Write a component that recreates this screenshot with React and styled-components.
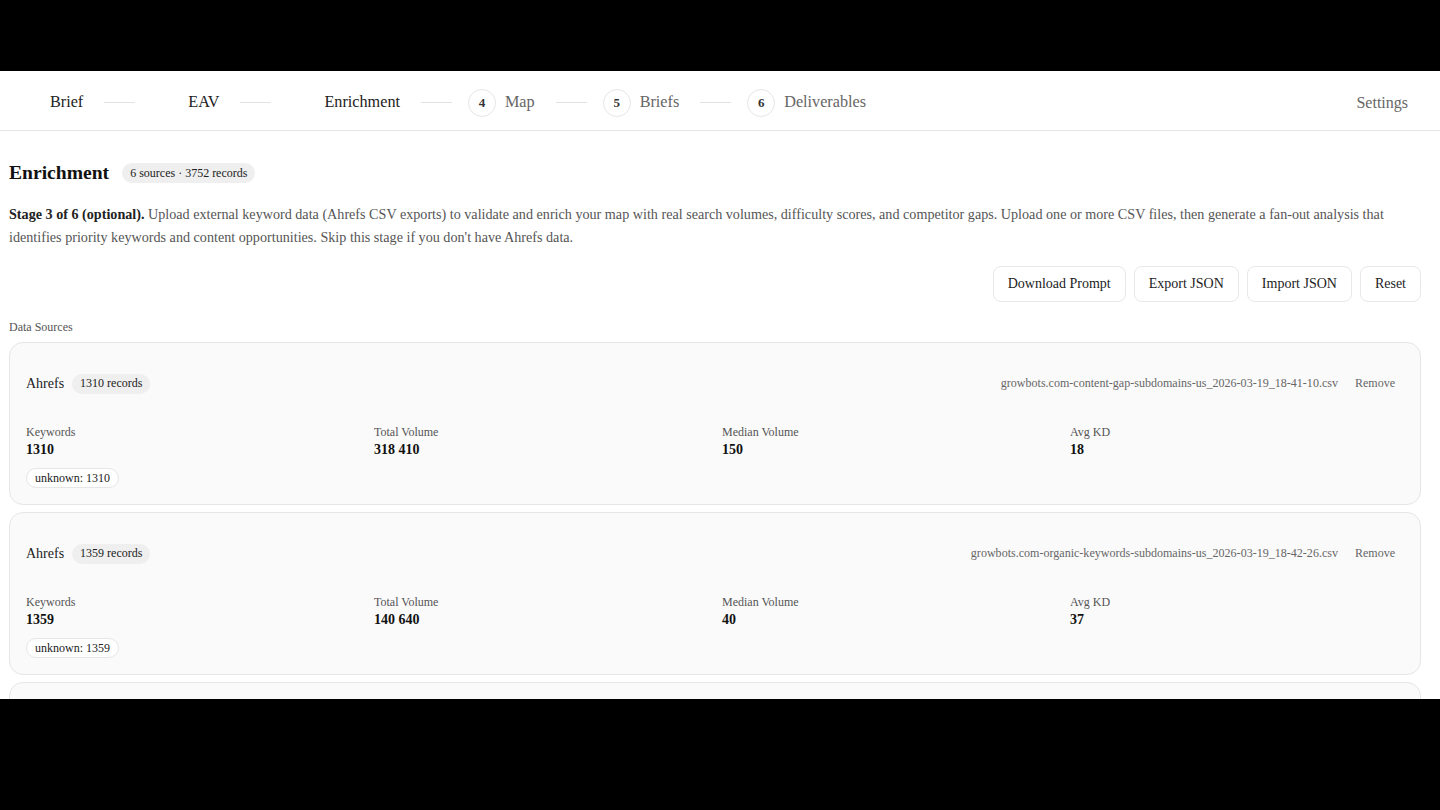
import React from 'react';
import styled, { createGlobalStyle } from 'styled-components';

const GlobalStyle = createGlobalStyle`
  html, body {
    margin: 0;
    padding: 0;
    background: #000;
  }
  body {
    font-family: "Liberation Serif", "Times New Roman", serif;
    color: #1a1a1a;
  }
  * { box-sizing: border-box; }
`;

const Screen = styled.div`
  height: 810px;
  padding-top: 71px;
  background: #000;
`;

const Frame = styled.div`
  height: 628px;
  overflow: hidden;
  background: #fff;
`;

const Nav = styled.header`
  height: 60px;
  border-bottom: 1px solid #e6e6e6;
  display: flex;
  align-items: center;
  justify-content: space-between;
  padding: 4px 32px 0 13px;
`;

const Steps = styled.div`
  display: flex;
  align-items: center;
`;

const Step = styled.div`
  display: flex;
  align-items: center;
  gap: 9px;
`;

const StepDot = styled.span`
  width: 28px;
  height: 28px;
  border-radius: 50%;
  border: 1px solid #e6e6e6;
  display: flex;
  align-items: center;
  justify-content: center;
  font-size: 13px;
  font-weight: 700;
  color: #333;
  visibility: ${(p) => (p.$done ? 'hidden' : 'visible')};
`;

const StepLabel = styled.span`
  font-size: 16.2px;
  color: ${(p) => (p.$done ? '#222' : '#666')};
`;

const Connector = styled.span`
  width: 31px;
  height: 1px;
  background: #e2e2e2;
  margin: 0 16px 0 21px;
`;

const SettingsLink = styled.a`
  font-size: 16px;
  color: #666;
  text-decoration: none;
  cursor: pointer;
`;

const Main = styled.main`
  padding: 25px 19px 0 9px;
`;

const TitleRow = styled.div`
  height: 34px;
  display: flex;
  align-items: center;
  gap: 13px;
`;

const Title = styled.h1`
  margin: 0;
  font-size: 19.6px;
  font-weight: 700;
  color: #111;
`;

const Pill = styled.span`
  display: inline-flex;
  align-items: center;
  height: 20px;
  padding: 0 8px;
  border-radius: 10px;
  background: ${(p) => (p.$outline ? '#fff' : '#efefef')};
  border: ${(p) => (p.$outline ? '1px solid #e6e6e6' : 'none')};
  font-size: 12px;
  color: #222;
  white-space: nowrap;
`;

const Description = styled.p`
  margin: 13px 0 0;
  font-size: 14.15px;
  line-height: 23px;
  color: #555;

  strong {
    color: #222;
  }
`;

const Actions = styled.div`
  display: flex;
  justify-content: flex-end;
  gap: 8px;
  margin-top: 17px;
`;

const ActionButton = styled.button`
  height: 36px;
  padding: 0 14px;
  border: 1px solid #e8e8e8;
  border-radius: 8px;
  background: #fff;
  font-family: inherit;
  font-size: 14px;
  color: #222;
  cursor: pointer;
`;

const SectionLabel = styled.div`
  margin-top: 17px;
  font-size: 12px;
  line-height: 16px;
  color: #555;
`;

const SourceList = styled.div`
  margin-top: 7px;
  display: flex;
  flex-direction: column;
  gap: 7px;
`;

const Card = styled.section`
  background: #fafafa;
  border: 1px solid #e6e6e6;
  border-radius: 14px;
  padding: 16px;
`;

const CardHeader = styled.div`
  height: 49px;
  display: flex;
  align-items: center;
  justify-content: space-between;
`;

const SourceName = styled.div`
  display: flex;
  align-items: center;
  gap: 8px;
  font-size: 14px;
  color: #222;
`;

const FileInfo = styled.div`
  display: flex;
  align-items: center;
  gap: 8px;
  font-size: 12.05px;
  color: #666;
`;

const RemoveButton = styled.button`
  border: none;
  background: none;
  padding: 0 9px;
  font-family: inherit;
  font-size: 12px;
  color: #666;
  cursor: pointer;
`;

const StatsGrid = styled.div`
  margin-top: 16px;
  display: grid;
  grid-template-columns: repeat(4, 1fr);
  column-gap: 14px;
`;

const StatLabel = styled.div`
  font-size: 12px;
  line-height: 16px;
  color: #555;
`;

const StatValue = styled.div`
  font-size: 14px;
  line-height: 20px;
  font-weight: 700;
  color: #111;
`;

const Tags = styled.div`
  margin-top: 8px;
  display: flex;
  gap: 6px;
`;

const steps = [
  { n: 1, label: 'Brief', done: true },
  { n: 2, label: 'EAV', done: true },
  { n: 3, label: 'Enrichment', done: true },
  { n: 4, label: 'Map' },
  { n: 5, label: 'Briefs' },
  { n: 6, label: 'Deliverables' },
];

const sources = [
  {
    name: 'Ahrefs',
    records: 1310,
    file: 'growbots.com-content-gap-subdomains-us_2026-03-19_18-41-10.csv',
    stats: [
      ['Keywords', '1310'],
      ['Total Volume', '318 410'],
      ['Median Volume', '150'],
      ['Avg KD', '18'],
    ],
    tags: ['unknown: 1310'],
  },
  {
    name: 'Ahrefs',
    records: 1359,
    file: 'growbots.com-organic-keywords-subdomains-us_2026-03-19_18-42-26.csv',
    stats: [
      ['Keywords', '1359'],
      ['Total Volume', '140 640'],
      ['Median Volume', '40'],
      ['Avg KD', '37'],
    ],
    tags: ['unknown: 1359'],
  },
  {
    name: 'Ahrefs',
    records: 362,
    file: 'growbots.com-organic-keywords-us_2026-03-19_18-43-02.csv',
    stats: [
      ['Keywords', '362'],
      ['Total Volume', '52 310'],
      ['Median Volume', '70'],
      ['Avg KD', '24'],
    ],
    tags: ['unknown: 362'],
  },
];

const App = () => {
  return (
    <>
      <GlobalStyle />
      <Screen>
        <Frame>
          <Nav>
            <Steps>
              {steps.map((s, i) => (
                <React.Fragment key={s.n}>
                  {i > 0 && <Connector />}
                  <Step>
                    <StepDot $done={s.done}>{s.n}</StepDot>
                    <StepLabel $done={s.done}>{s.label}</StepLabel>
                  </Step>
                </React.Fragment>
              ))}
            </Steps>
            <SettingsLink>Settings</SettingsLink>
          </Nav>

          <Main>
            <TitleRow>
              <Title>Enrichment</Title>
              <Pill>6 sources · 3752 records</Pill>
            </TitleRow>
            <Description>
              <strong>Stage 3 of 6 (optional).</strong> Upload external keyword data (Ahrefs CSV
              exports) to validate and enrich your map with real search volumes, difficulty scores,
              and competitor gaps. Upload one or more CSV files, then generate a fan-out analysis
              that identifies priority keywords and content opportunities. Skip this stage if you
              don't have Ahrefs data.
            </Description>

            <Actions>
              <ActionButton>Download Prompt</ActionButton>
              <ActionButton>Export JSON</ActionButton>
              <ActionButton>Import JSON</ActionButton>
              <ActionButton>Reset</ActionButton>
            </Actions>

            <SectionLabel>Data Sources</SectionLabel>
            <SourceList>
              {sources.map((src, i) => (
                <Card key={i}>
                  <CardHeader>
                    <SourceName>
                      {src.name}
                      <Pill>{src.records} records</Pill>
                    </SourceName>
                    <FileInfo>
                      {src.file}
                      <RemoveButton>Remove</RemoveButton>
                    </FileInfo>
                  </CardHeader>
                  <StatsGrid>
                    {src.stats.map(([label, value]) => (
                      <div key={label}>
                        <StatLabel>{label}</StatLabel>
                        <StatValue>{value}</StatValue>
                      </div>
                    ))}
                  </StatsGrid>
                  <Tags>
                    {src.tags.map((t) => (
                      <Pill key={t} $outline>{t}</Pill>
                    ))}
                  </Tags>
                </Card>
              ))}
            </SourceList>
          </Main>
        </Frame>
      </Screen>
    </>
  );
};

export default App;
